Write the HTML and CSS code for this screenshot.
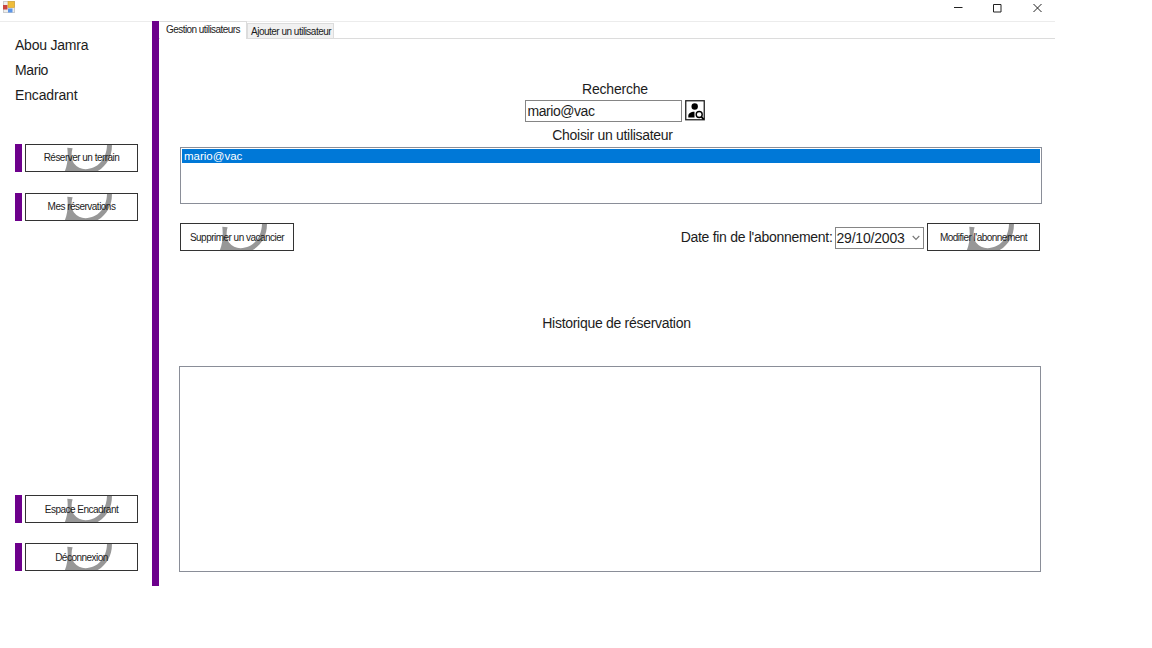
FILE: index.html
```html
<!DOCTYPE html>
<html lang="fr">
<head>
<meta charset="utf-8">
<title>Gestion utilisateurs</title>
<link rel="stylesheet" href="styles.css">
</head>
<body>
<svg class="defs" width="0" height="0">
  <symbol id="arc" viewBox="1 1 112 26">
    <path fill="#979797" d="M42.300 3.700L47.600 4.300C45.800 10 46.500 16 49 19.500C52 23.500 56 25.200 60.500 25.200C73 24.700 82 15 82 0H86.900C87.500 12 81.500 22.500 71 28H39.500C42.800 20.500 43.200 12 42.300 3.700Z"/>
  </symbol>
</svg>
<div class="window">
  <header class="titlebar">
    <svg class="app-icon" width="13" height="13" viewBox="0 0 13 13">
      <rect x=".5" y=".5" width="11" height="11" fill="#eee" stroke="#ccc"/>
      <rect x="0" y="4" width="4.500" height="4.500" fill="#c9443f"/>
      <rect x="5" y="0.500" width="6.500" height="6" fill="#efbd3a" stroke="#d19d28" stroke-width=".6"/>
      <rect x="5" y="7.500" width="4.500" height="4" fill="#5c96e8"/>
    </svg>
    <svg class="controls" width="90" height="12" viewBox="0 0 90 12" fill="none" stroke="#222">
      <path d="M1 5.500H9.500M40.500 2.500H48V10H40.500ZM80.500 2L88.500 10M88.500 2L80.500 10"/>
    </svg>
  </header>
  <div class="body">
    <aside class="sidebar">
      <div class="identity"><div><span class="w-name">Abou Jamra</span></div><div><span class="w-first">Mario</span></div><div><span class="w-role">Encadrant</span></div></div>
      <nav class="nav">
        <div class="nav-item"><i></i><button class="btn"><svg><use href="#arc"/></svg><span>Réserver un terrain</span></button></div>
        <div class="nav-item"><i></i><button class="btn"><svg><use href="#arc"/></svg><span>Mes réservations</span></button></div>
      </nav>
      <nav class="nav nav-bottom">
        <div class="nav-item"><i></i><button class="btn"><svg><use href="#arc"/></svg><span>Espace Encadrant</span></button></div>
        <div class="nav-item"><i></i><button class="btn"><svg><use href="#arc"/></svg><span>Déconnexion</span></button></div>
      </nav>
    </aside>
    <div class="divider"></div>
    <main class="main">
      <div class="tabs">
        <div class="tab active"><span>Gestion utilisateurs</span></div>
        <div class="tab"><span>Ajouter un utilisateur</span></div>
      </div>
      <section class="panel">
        <div class="label search-label"><span>Recherche</span></div>
        <div class="search">
          <div class="field"><span class="w-query">mario@vac</span></div>
          <svg class="search-btn" width="20" height="21" viewBox="0 0 20 21">
            <rect x=".75" y=".75" width="18.500" height="19" fill="#fff" stroke="#222" stroke-width="1.300"/>
            <circle cx="9.700" cy="6.500" r="3.200"/>
            <path d="M3.300 17.500V16C3.300 13.200 5.600 12 9.500 11.800V17.500Z"/>
            <circle cx="14.200" cy="14.500" r="3" fill="none" stroke="#000" stroke-width="1.400"/>
            <path d="M16.200 16.700L18.700 19.300" stroke="#000" stroke-width="1.800"/>
          </svg>
        </div>
        <div class="label choose-label"><span>Choisir un utilisateur</span></div>
        <div class="list"><div class="row"><span>mario@vac</span></div></div>
        <div class="actions">
          <button class="btn"><svg><use href="#arc"/></svg><span>Supprimer un vacancier</span></button>
          <div class="subscription">
            <span class="w-date">Date fin de l'abonnement:</span>
            <div class="date"><span class="w-val">29/10/2003</span><svg width="8" height="6" viewBox="0 0 8 6" fill="none" stroke="#777" stroke-width="1.100"><path d="M.7 1L4 4.500L7.300 1"/></svg></div>
            <button class="btn"><svg><use href="#arc"/></svg><span>Modifier l'abonnement</span></button>
          </div>
        </div>
        <div class="label history-label"><span>Historique de réservation</span></div>
        <div class="history"></div>
      </section>
    </main>
  </div>
</div>
</body>
</html>
```
FILE: styles.css
```css
* { box-sizing: border-box; }
body { margin: 0; background: #fff; color: #1c1c1c; font: 14px/20px "Liberation Sans", Arial, sans-serif; }
span { white-space: nowrap; }
.defs { display: block; }
.window { width: 1055px; height: 586px; display: flex; flex-direction: column; }
.titlebar { height: 22px; flex: none; display: flex; justify-content: space-between; padding: 1px 12px 0 3px; border-bottom: 1px solid #ececec; }
.controls { margin-top: 1px; }
.body { flex: 1; display: flex; margin-top: -1px; min-height: 0; }
.sidebar { width: 152px; flex: none; display: flex; flex-direction: column; padding: 12px 14px 15px 15px; }
.identity { line-height: 25px; height: 110.500px; }
.w-name { letter-spacing: -.22px; }
.w-first { letter-spacing: -.4px; }
.w-role { letter-spacing: -.15px; }
.nav { display: flex; flex-direction: column; gap: 21px; }
.nav-bottom { margin-top: auto; gap: 20px; }
.nav-item { display: flex; gap: 3px; }
.nav-item i { width: 7px; background: #6d008c; }
.btn { width: 113.500px; height: 28px; padding: 0; display: grid; place-items: center; background: #fff; border: 1px solid #333; border-radius: 0; font: 10px/14px "Liberation Sans", Arial, sans-serif; letter-spacing: -.52px; color: #1c1c1c; }
.btn svg, .btn span { grid-area: 1 / 1; }
.btn span { padding-top: 1px; }
.btn svg { width: 112px; height: 26px; }
.divider { width: 7px; background: #6d008c; flex: none; }
.main { flex: 1; min-width: 0; }
.tabs { height: 18px; padding-left: 1px; display: flex; align-items: flex-end; border-bottom: 1px solid #dcdcdc; font-size: 10px; line-height: 15px; letter-spacing: -.5px; }
.tab { width: 87px; height: 15px; padding-left: 3px; background: #f1f1f1; border: 1px solid #dcdcdc; border-bottom: 0; }
.tab.active { height: 18px; margin-bottom: -1px; padding-left: 6px; background: #fff; border-left: 0; letter-spacing: -.55px; }
.panel { padding: 39px 14px 0 21px; }
.label { display: flex; justify-content: center; line-height: 22px; letter-spacing: -.29px; }
.search-label { padding-left: 9px; letter-spacing: -.2px; }
.search { display: flex; gap: 3px; padding-left: 344.500px; height: 22px; }
.field { width: 157px; height: 22px; padding-left: 2px; border: 1px solid #858585; line-height: 21px; }
.w-query { letter-spacing: -.45px; }
.choose-label { padding: 2px 0 0 4px; height: 25px; line-height: 23px; }
.list { width: 862px; height: 57px; padding: 1px; border: 1px solid #8a8e98; }
.row { height: 14px; background: #0078d7; color: #fff; line-height: 14px; font-size: 11.500px; padding-left: 2px; }
.actions { display: flex; justify-content: space-between; margin-top: 19px; width: 860px; }
.subscription { display: flex; align-items: center; height: 28px; line-height: 29px; }
.date { width: 89px; height: 22px; margin: 2px 3px 0 2px; display: flex; align-items: center; justify-content: space-between; padding: 0 3px 0 1px; border: 1px solid #858585; }
.w-date { letter-spacing: -.29px; }
.w-val { letter-spacing: -.2px; }
.history-label { margin-top: 61px; padding-left: 12px; }
.history { width: 862px; height: 206px; margin: 32px 0 0 -1px; border: 1px solid #8a8e98; }
```
